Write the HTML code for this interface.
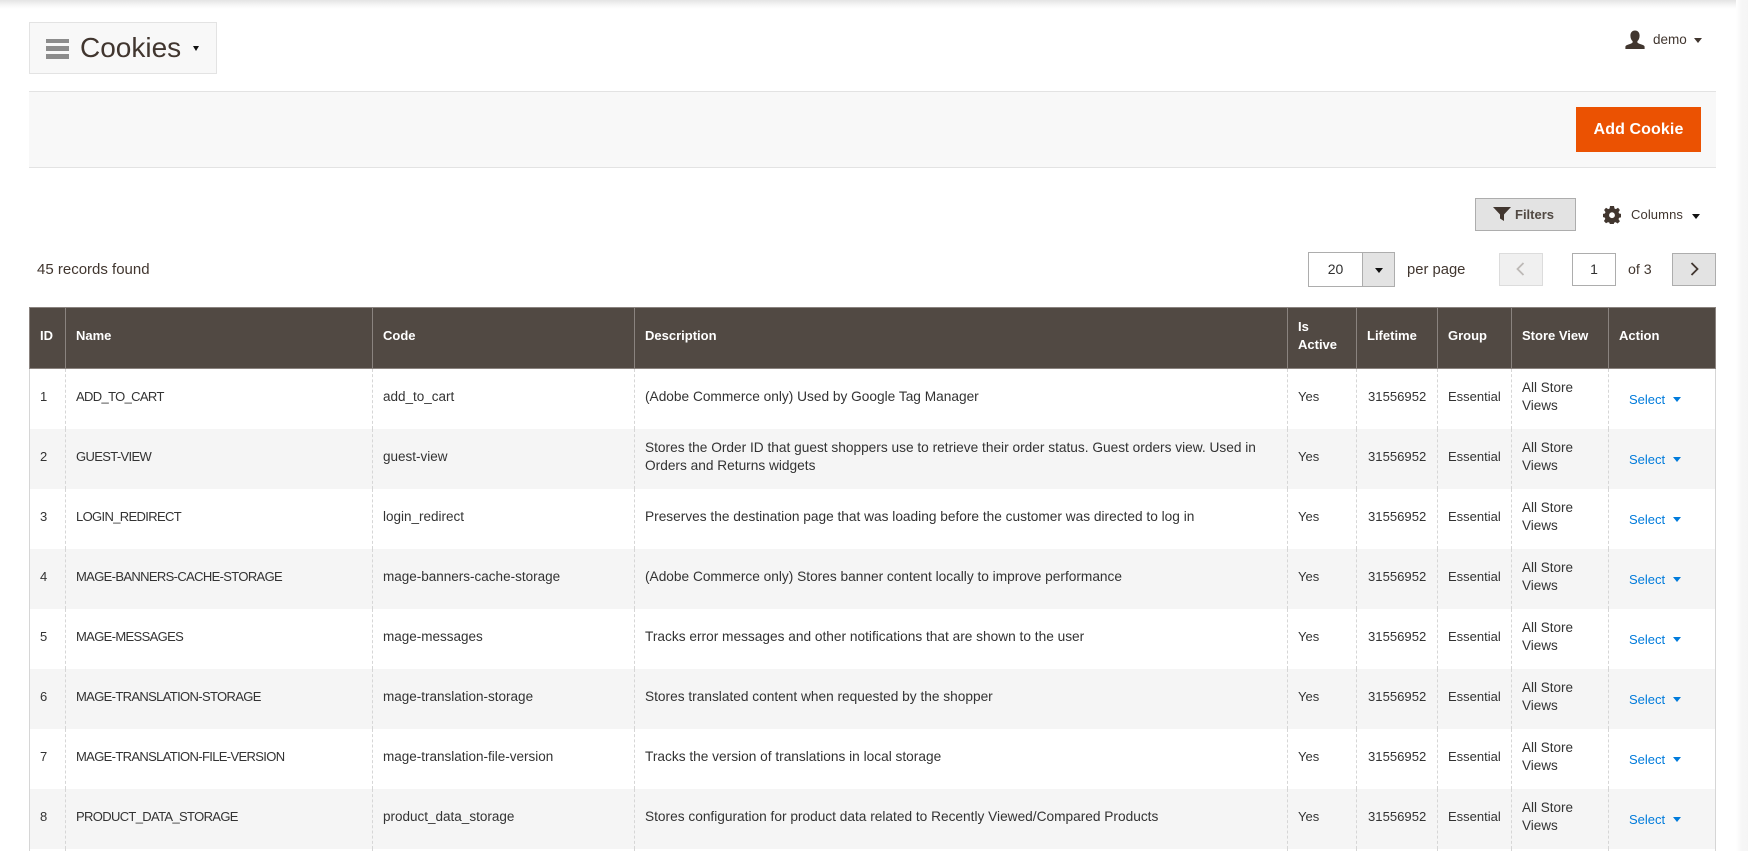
<!DOCTYPE html>
<html lang="en">
<head>
<meta charset="utf-8">
<title>Cookies</title>
<style>
*{box-sizing:border-box}
html,body{margin:0;padding:0;width:1748px;height:851px;overflow:hidden;background:#fff}
body{font-family:"Liberation Sans",Arial,sans-serif;font-size:13px;color:#303030;position:relative}
.abs{position:absolute;white-space:nowrap}
.topshadow{position:absolute;left:0;top:0;width:1748px;height:9px;background:linear-gradient(#e4e4e4,#f6f6f6 55%,#fff)}
.rightshadow{position:absolute;left:1736px;top:0;width:12px;height:851px;background:linear-gradient(90deg,#fff,#f6f6f6 50%,#f5f5f5)}
.titlebox{left:29px;top:22px;width:188px;height:52px;background:#f8f8f8;border:1px solid #e3e3e3}
.bar{position:absolute;left:46px;width:23px;height:5px;background:#8c8c8c}
.title{left:80px;top:31px;font-size:28px;line-height:34px;color:#41362f}
.arrow{position:absolute;width:0;height:0;border-left:4px solid transparent;border-right:4px solid transparent;border-top:5px solid #303030}
.actions{left:29px;top:91px;width:1687px;height:77px;background:#f8f8f8;border-top:1px solid #e3e3e3;border-bottom:1px solid #e3e3e3}
.add{left:1576px;top:107px;width:125px;height:45px;background:#eb5202;color:#fff;font-size:16px;font-weight:bold;line-height:45px;text-align:center;letter-spacing:.1px}
.btn{position:absolute;background:#e3e3e3;border:1px solid #adadad}
.filters{left:1475px;top:198px;width:101px;height:33px}
.t13{font-size:13px;line-height:18px;color:#41362f}
.input{position:absolute;background:#fff;border:1px solid #adadad;text-align:center;font-size:14px;line-height:32px;color:#303030}
table{position:absolute;left:29px;top:307px;width:1686px;border-collapse:collapse;table-layout:fixed;border-left:1px solid #d6d6d6;border-right:1px solid #d6d6d6}
th{height:61px;background:#514943;color:#fff;font-weight:bold;font-size:13px;line-height:18px;text-align:left;vertical-align:middle;padding:0 8px 5px 10px;border:1px solid #8a837f}
td{height:60px;font-size:13px;line-height:18px;vertical-align:middle;padding:0 6px 4px 10px;border-left:1px dashed #d6d6d6;border-right:1px dashed #d6d6d6;color:#333}
tr.even td{background:#f5f5f5}
td.n{letter-spacing:-.65px}
td.c{font-size:13.5px}
td.d{font-size:13.7px}
td.l{padding-left:11px;font-size:13.1px}
td.s{font-size:13.5px}
td.act{padding:2px 0 0 20px;color:#007bdb;line-height:18px}
td.act i{display:inline-block;width:0;height:0;border-left:4px solid transparent;border-right:4px solid transparent;border-top:5px solid #007bdb;margin-left:8px;vertical-align:2px}
tr.last td{height:2px;padding:0;line-height:0;font-size:0}
</style>
</head>
<body>
<div class="topshadow"></div>
<div class="rightshadow"></div>

<div class="abs titlebox"></div>
<div class="bar" style="top:39px;height:4px"></div>
<div class="bar" style="top:46px;height:5px"></div>
<div class="bar" style="top:54px;height:5px"></div>
<div class="abs title">Cookies</div>
<div class="arrow" style="left:193px;top:46px;border-left-width:3.5px;border-right-width:3.5px;border-top-width:5px;border-top-color:#111"></div>

<svg class="abs" style="left:1625px;top:30px" width="20" height="19" viewBox="0 0 20 19"><path fill="#41362f" d="M10 0.5c3 0 4.6 2.2 4.6 5.2 0 2.4-1 4.4-2.2 5.400v1.200c0 .7 1.400 1.200 3.400 2 2 .7 3.600 1.100 3.800 2.400V19H.4v-2.300c.2-1.300 1.800-1.700 3.800-2.400 2-.8 3.400-1.300 3.400-2v-1.200C6.400 10.100 5.400 8.100 5.400 5.700 5.400 2.700 7 .5 10 .5z"/></svg>
<div class="abs" style="left:1653px;top:31px;font-size:13.5px;line-height:18px;color:#41362f">demo</div>
<div class="arrow" style="left:1694px;top:38px;border-top-color:#41362f"></div>

<div class="abs actions"></div>
<div class="abs add">Add Cookie</div>

<div class="btn filters"></div>
<svg class="abs" style="left:1492px;top:206px" width="20" height="16" viewBox="0 0 20 16"><path fill="#41362f" d="M1 1h18l-7 7.500v6.500l-4-2.500V8.500z"/></svg>
<div class="abs t13" style="left:1515px;top:206px;font-weight:bold;color:#514943;font-size:13px">Filters</div>

<svg class="abs" style="left:1603px;top:206px" width="18" height="18" viewBox="0 0 18 18"><path fill="#41362f" fill-rule="evenodd" d="M7 0h4l.5 2.500 1.400.6L15 1.700 16.900 4l-1.400 2.100.6 1.400 2.500.5v3.200l-2.500.5-.6 1.400 1.400 2.100-2.200 2.300-2.200-1.400-1.400.6-.5 2.300H7l-.5-2.300-1.400-.6L3 17.300.9 15l1.400-2.100-.6-1.400L-.6 11V8l2.500-.5.6-1.400L1.100 4 3 1.700l2.200 1.400 1.400-.6zM9 6.300a2.900 2.900 0 1 0 0 5.800A2.900 2.900 0 0 0 9 6.300z"/></svg>
<div class="abs t13" style="left:1631px;top:206px;letter-spacing:.1px">Columns</div>
<div class="arrow" style="left:1692px;top:214px;border-top-color:#111"></div>

<div class="abs" style="left:37px;top:261px;font-size:15px;line-height:18px;color:#41362f">45 records found</div>

<div class="input" style="left:1308px;top:252px;width:55px;height:35px;line-height:33px">20</div>
<div class="btn" style="left:1362px;top:252px;width:33px;height:35px"></div>
<div class="arrow" style="left:1375px;top:268px;border-top-color:#111"></div>
<div class="abs t13" style="left:1407px;top:261px;font-size:14.8px;line-height:18px">per page</div>

<div class="btn" style="left:1499px;top:253px;width:44px;height:33px;background:#f0f0f0;border-color:#dcdcdc"></div>
<svg class="abs" style="left:1514px;top:261px" width="14" height="16" viewBox="0 0 14 16"><path d="M9.500 2 3.500 8l6 6" fill="none" stroke="#bdb9b6" stroke-width="1.800"/></svg>
<div class="input" style="left:1572px;top:253px;width:44px;height:33px;line-height:31px">1</div>
<div class="abs t13" style="left:1628px;top:261px;font-size:14.2px;line-height:18px">of 3</div>
<div class="btn" style="left:1672px;top:253px;width:44px;height:33px"></div>
<svg class="abs" style="left:1687px;top:261px" width="14" height="16" viewBox="0 0 14 16"><path d="M4.500 2l6 6-6 6" fill="none" stroke="#41362f" stroke-width="1.800"/></svg>

<table>
<colgroup>
<col style="width:36px"><col style="width:307px"><col style="width:262px"><col style="width:653px"><col style="width:69px"><col style="width:81px"><col style="width:74px"><col style="width:97px"><col style="width:107px">
</colgroup>
<thead>
<tr><th>ID</th><th>Name</th><th>Code</th><th>Description</th><th>Is Active</th><th>Lifetime</th><th>Group</th><th>Store View</th><th>Action</th></tr>
</thead>
<tbody>
<tr><td>1</td><td class="n">ADD_TO_CART</td><td class="c">add_to_cart</td><td class="d">(Adobe Commerce only) Used by Google Tag Manager</td><td>Yes</td><td class="l">31556952</td><td>Essential</td><td class="s">All Store Views</td><td class="act">Select<i></i></td></tr>
<tr class="even"><td>2</td><td class="n">GUEST-VIEW</td><td class="c">guest-view</td><td class="d">Stores the Order ID that guest shoppers use to retrieve their order status. Guest orders view. Used in Orders and Returns widgets</td><td>Yes</td><td class="l">31556952</td><td>Essential</td><td class="s">All Store Views</td><td class="act">Select<i></i></td></tr>
<tr><td>3</td><td class="n">LOGIN_REDIRECT</td><td class="c">login_redirect</td><td class="d">Preserves the destination page that was loading before the customer was directed to log in</td><td>Yes</td><td class="l">31556952</td><td>Essential</td><td class="s">All Store Views</td><td class="act">Select<i></i></td></tr>
<tr class="even"><td>4</td><td class="n">MAGE-BANNERS-CACHE-STORAGE</td><td class="c">mage-banners-cache-storage</td><td class="d">(Adobe Commerce only) Stores banner content locally to improve performance</td><td>Yes</td><td class="l">31556952</td><td>Essential</td><td class="s">All Store Views</td><td class="act">Select<i></i></td></tr>
<tr><td>5</td><td class="n">MAGE-MESSAGES</td><td class="c">mage-messages</td><td class="d">Tracks error messages and other notifications that are shown to the user</td><td>Yes</td><td class="l">31556952</td><td>Essential</td><td class="s">All Store Views</td><td class="act">Select<i></i></td></tr>
<tr class="even"><td>6</td><td class="n">MAGE-TRANSLATION-STORAGE</td><td class="c">mage-translation-storage</td><td class="d">Stores translated content when requested by the shopper</td><td>Yes</td><td class="l">31556952</td><td>Essential</td><td class="s">All Store Views</td><td class="act">Select<i></i></td></tr>
<tr><td>7</td><td class="n">MAGE-TRANSLATION-FILE-VERSION</td><td class="c">mage-translation-file-version</td><td class="d">Tracks the version of translations in local storage</td><td>Yes</td><td class="l">31556952</td><td>Essential</td><td class="s">All Store Views</td><td class="act">Select<i></i></td></tr>
<tr class="even"><td>8</td><td class="n">PRODUCT_DATA_STORAGE</td><td class="c">product_data_storage</td><td class="d">Stores configuration for product data related to Recently Viewed/Compared Products</td><td>Yes</td><td class="l">31556952</td><td>Essential</td><td class="s">All Store Views</td><td class="act">Select<i></i></td></tr>
<tr class="last"><td></td><td></td><td></td><td></td><td></td><td></td><td></td><td></td><td></td></tr>
</tbody>
</table>
</body>
</html>
